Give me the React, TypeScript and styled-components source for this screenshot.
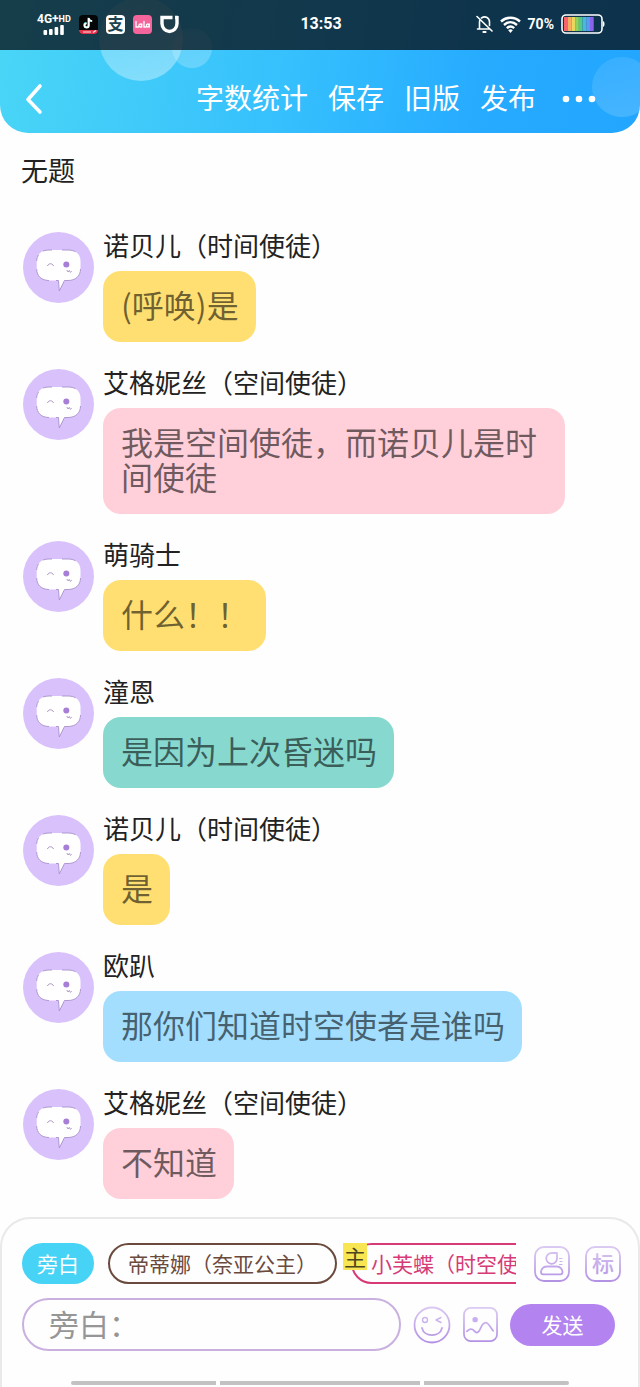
import React from "react";
import styled, { createGlobalStyle } from "styled-components";

const GlobalStyle = createGlobalStyle`
  * { box-sizing: border-box; }
  html, body { margin: 0; padding: 0; background: #fefefe; }
  body, button, input {
    font-family: "Noto Sans CJK SC", "Noto Sans", sans-serif;
  }
  button { border: 0; padding: 0; background: none; color: inherit; cursor: pointer; white-space: nowrap; }
  svg { display: block; flex: none; }
`;

const Page = styled.div`
  display: flex;
  flex-direction: column;
  min-height: 100vh;
  background: #fefefe;
`;

/* ---------- header ---------- */

const Header = styled.header`
  position: relative;
  overflow: hidden;
  border-radius: 0 0 28px 28px;
  background: linear-gradient(100deg, #4ad6f6 0%, #36c0fd 45%, #26abff 75%, #22a6ff 100%);
  color: #fff;
`;

const Orb = styled.span<{ $size: number; $top: number; $left?: number; $right?: number; $alpha: number }>`
  position: absolute;
  width: ${(p) => p.$size}px;
  height: ${(p) => p.$size}px;
  top: ${(p) => p.$top}px;
  ${(p) => (p.$left !== undefined ? `left: ${p.$left}px;` : "")}
  ${(p) => (p.$right !== undefined ? `right: ${p.$right}px;` : "")}
  border-radius: 50%;
  background: linear-gradient(
    160deg,
    rgba(255, 255, 255, ${(p) => p.$alpha / 200}),
    rgba(255, 255, 255, ${(p) => p.$alpha / 100})
  );
`;

const StatusBar = styled.div`
  position: relative;
  display: grid;
  grid-template-columns: 1fr auto 1fr;
  align-items: center;
  height: 50px;
  padding: 0 35px 2px 37px;
  background: rgba(8, 18, 26, 0.78);
`;

const StatusGroup = styled.div<{ $end?: boolean }>`
  display: flex;
  align-items: center;
  gap: ${(p) => (p.$end ? 7 : 8)}px;
  justify-content: ${(p) => (p.$end ? "flex-end" : "flex-start")};
`;

const Network = styled.div`
  display: flex;
  flex-direction: column;
  align-items: center;
  gap: 1px;
  font: 700 12px/10px Roboto, sans-serif;
  small { font-size: 9px; vertical-align: top; }
`;

const Clock = styled.time`
  font: 700 16px/20px Roboto, sans-serif;
`;

const Percent = styled.span`
  font: 700 14px/20px Roboto, sans-serif;
`;

const AppBar = styled.div`
  position: relative;
  display: flex;
  align-items: center;
  gap: 20px;
  height: 83px;
  padding: 14px 44px 0 24px;
`;

const BackButton = styled.button`
  margin-right: auto;
`;

const BarAction = styled.button`
  padding-bottom: 4px;
  font-size: 28px;
  line-height: 36px;
`;

const MoreButton = styled.button`
  padding-left: 6px;
`;

/* ---------- conversation ---------- */

const Main = styled.main`
  flex: 1;
  padding: 18px 23px;
`;

const Title = styled.h1`
  margin: 0 0 44px -2px;
  font-size: 27px;
  font-weight: 400;
  line-height: 37px;
  color: #222;
`;

const Thread = styled.ol`
  display: flex;
  flex-direction: column;
  gap: 27px;
  margin: 0;
  padding: 0;
  list-style: none;
`;

const Message = styled.li`
  display: flex;
  align-items: flex-start;
  gap: 9px;
`;

const MessageBody = styled.div`
  display: flex;
  flex-direction: column;
  align-items: flex-start;
  min-width: 0;
`;

const Speaker = styled.span`
  margin-bottom: 13px;
  font-size: 26px;
  line-height: 26px;
  color: #222;
`;

const Bubble = styled.p<{ $color: string }>`
  max-width: 462px;
  margin: 0;
  padding: 16px 17px 20px 18px;
  border-radius: 18px;
  background: ${(p) => p.$color};
  font-size: 32px;
  line-height: 35px;
  color: rgba(0, 0, 0, 0.58);
`;

/* ---------- composer ---------- */

const Composer = styled.footer`
  display: flex;
  flex-direction: column;
  gap: 14px;
  padding: 24px 17px 2px 20px;
  border: 2px solid #e9e9e9;
  border-bottom: 0;
  border-radius: 30px 30px 0 0;
  background: #fefefe;
`;

const RoleRow = styled.div`
  display: flex;
  align-items: center;
  gap: 15px;
`;

const RoleList = styled.div`
  display: flex;
  flex: 1;
  gap: 14px;
  min-width: 0;
  margin-right: 3px;
  overflow: hidden;
`;

const RoleChip = styled.button<{ $color: string; $filled?: boolean }>`
  position: relative;
  flex: none;
  height: 41px;
  padding: 0 ${(p) => (p.$filled ? 13 : 18)}px 2px;
  border: 2px solid ${(p) => p.$color};
  border-radius: 21px;
  background: ${(p) => (p.$filled ? p.$color : "transparent")};
  color: ${(p) => (p.$filled ? "#fff" : p.$color)};
  font-size: 21px;
  line-height: 24px;
`;

const LeadBadge = styled.span`
  position: absolute;
  top: -2px;
  left: -10px;
  width: 24px;
  height: 27px;
  background: #f8e552;
  color: #4c4620;
  font-size: 22px;
  line-height: 26px;
  text-align: center;
`;

const InputRow = styled.form`
  display: flex;
  align-items: center;
  gap: 12px;
  margin-right: 6px;
`;

const LineInput = styled.input`
  flex: 1;
  min-width: 0;
  height: 53px;
  padding: 0 25px 4px;
  border: 2px solid #c9b0de;
  border-radius: 27px;
  outline: 0;
  background: transparent;
  font-size: 30px;
  color: #444;
  &::placeholder { color: #969696; opacity: 1; }
`;

const SendButton = styled.button`
  width: 105px;
  height: 42px;
  padding-bottom: 2px;
  border-radius: 21px;
  background: #b383f0;
  color: #fff;
  font-size: 21px;
`;

const SystemNav = styled.div`
  display: grid;
  grid-template-columns: 145fr 200fr 145fr;
  gap: 4px;
  margin: 16px 52px 0 49px;
  span { height: 4px; background: #c2c2c2; }
  span:first-child { border-radius: 2px 0 0 2px; }
  span:last-child { border-radius: 0 2px 2px 0; }
`;

/* ---------- drawings ---------- */

const SignalBars = () => (
  <svg width="22" height="10" viewBox="0 0 22 10" fill="#fff">
    <rect x="0.5" y="5" width="3.6" height="5" rx="1" />
    <rect x="6" y="4" width="3.6" height="6" rx="1" />
    <rect x="11.6" y="2" width="3.6" height="8" rx="1" />
    <rect x="17.2" y="0" width="3.6" height="10" rx="1" />
  </svg>
);

const MusicApp = () => (
  <svg width="19" height="19" viewBox="0 0 19 19">
    <rect width="19" height="19" rx="4" fill="#050608" />
    <path d="M9.4 2.8v7.300a2.100 2.100 0 1 1-2.100-2.100M9.400 3c.2 2 1.400 3 3.400 3.200" fill="none" stroke="#35dfe0" strokeWidth="1.8" />
    <path d="M9.800 3v7.400a2.100 2.100 0 1 1-2.100-2.100M9.800 3c.2 2 1.400 3 3.400 3.200" fill="none" stroke="#fff" strokeWidth="1.8" />
    <path d="M0 15h19c0 2.600-1.500 4-4 4H4c-2.500 0-4-1.400-4-4z" fill="#e3344c" />
    <path d="M4 17h8M14 17.500l3-2" stroke="#ffdfe2" strokeWidth="1.200" />
  </svg>
);

const PayApp = () => (
  <svg width="19" height="19" viewBox="0 0 19 19">
    <rect width="19" height="19" rx="4" fill="#fff" />
    <text x="9.5" y="15" fontSize="16" fontWeight="700" textAnchor="middle" fill="#20444f">支</text>
  </svg>
);

const LalaApp = () => (
  <svg width="19" height="19" viewBox="0 0 19 19">
    <rect width="19" height="19" rx="4" fill="#f4669b" />
    <path
      d="M3 6.500v5.500h2.500M8.500 10.200a1.300 1.500 0 1 0 0 .6M8.800 9v3M11 6.500v5.500h2M16 10.200a1.300 1.500 0 1 0 0 .6M16.300 9v3"
      fill="none"
      stroke="#fff"
      strokeWidth="1.300"
      strokeLinecap="round"
    />
  </svg>
);

const ShieldApp = () => (
  <svg width="19" height="19" viewBox="0 0 19 19" fill="none" stroke="#fff">
    <path d="M12.500 2.500H2v6c0 4.500 3.300 8 7.500 8s7.500-3.500 7.500-8V1" strokeWidth="3.400" />
    <path d="M15 2.500h3" strokeWidth="3.400" />
  </svg>
);

const BellOff = () => (
  <svg width="17" height="18" viewBox="0 0 17 18" fill="none" stroke="#fff" strokeWidth="1.600" strokeLinecap="round">
    <path d="M1 1.500l15 14.500M1.500 14h12M3.500 14V7c0-.8.2-1.500.5-2.200M5.500 3C9.500.2 13.500 3 13.500 7v3.500" />
    <path d="M7.300 17h2.400" strokeWidth="1.800" />
  </svg>
);

const Wifi = () => (
  <svg width="21" height="17" viewBox="0 0 21 17" fill="none" stroke="#fff" strokeWidth="2.400">
    <path d="M1 5.500c5.500-5 13.500-5 19 0M4 9c4-3.600 9-3.600 13 0M6.800 12.200c2.300-2 5.100-2 7.400 0" />
    <path d="M8.200 14.200c1.400-1.200 3.200-1.200 4.600 0L10.500 17z" fill="#fff" stroke="none" />
  </svg>
);

const Battery = () => {
  const cells = ["#f4666c", "#f9ad62", "#e8d75c", "#8fd25e", "#55c98a", "#4ab9d8", "#579df0", "#8a63ec"];
  return (
    <svg width="44" height="20" viewBox="0 0 44 20">
      <rect x="1" y="1" width="40" height="18" rx="4" fill="none" stroke="#fff" strokeWidth="1.600" />
      <path d="M42 7c2 .5 2 5.500 0 6z" fill="#fff" />
      {cells.map((color, i) => (
        <rect key={color} x={3 + i * 3.7} y="3" width="3.8" height="14" fill={color} />
      ))}
    </svg>
  );
};

const Chevron = () => (
  <svg width="20" height="32" viewBox="0 0 20 32" fill="none" stroke="#fff" strokeWidth="3.600" strokeLinecap="round" strokeLinejoin="round">
    <path d="M16 3L4 16.500 16 29" />
  </svg>
);

const Dots = () => (
  <svg width="34" height="8" viewBox="0 0 34 8" fill="#fff">
    <circle cx="4" cy="4" r="3.300" />
    <circle cx="17" cy="4" r="3.300" />
    <circle cx="30" cy="4" r="3.300" />
  </svg>
);

const Avatar = () => (
  <svg width="71" height="71" viewBox="0 0 71 71" role="img" aria-label="头像">
    <circle cx="35.5" cy="35.5" r="35.5" fill="#d9c2fc" />
    <path
      d="M26 18h19c8 0 12.500 4.500 12.500 11v8c0 7-5 11.500-12.500 11.500h-3.500L36.300 59 35.500 48.500H26c-7.500 0-12.300-4.500-12.300-11.500v-8C13.700 22.500 18.500 18 26 18z"
      fill="#fff"
    />
    <path
      d="M20 19c2-.7 4-1 6-1h3M39 18h6c3 0 5.500.7 7.500 1.700M57.500 37c0 7-5 11.500-12.500 11.500h-3.500L36.300 59 35.500 48.500H33M26 48.500c-7.500 0-12.300-4.500-12.300-11.500M13.700 29c0-2.500.8-4.500 2-6.200"
      fill="none"
      stroke="#a890c8"
      strokeWidth="0.9"
    />
    <path d="M24.500 34c.8-3 5-3 6 0" fill="none" stroke="#9d88b8" strokeWidth="0.9" />
    <circle cx="43.3" cy="32.6" r="3" fill="#a77fd6" />
    <path d="M43.800 38l1.300 2 1.200-1.600 1 2 1.500-1.200" fill="none" stroke="#a891c2" strokeWidth="0.9" />
  </svg>
);

const PurpleFade = ({ id }: { id: string }) => (
  <defs>
    <linearGradient id={id} gradientUnits="userSpaceOnUse" x1="0" y1="0" x2="0" y2="36">
      <stop offset="0" stopColor="#dccbf3" />
      <stop offset="1" stopColor="#b391e4" />
    </linearGradient>
  </defs>
);

const CastIcon = () => (
  <svg width="36" height="36" viewBox="0 0 36 36" fill="none" stroke="url(#cast)" strokeWidth="1.800" strokeLinecap="round" strokeLinejoin="round">
    <PurpleFade id="cast" />
    <rect x="1" y="1" width="34" height="34" rx="9" />
    <path d="M18 7h5v5.500A5.400 5.400 0 1 1 18 7z" />
    <path d="M12.500 20.500h10.500c3.500 0 5.500 3 5.500 5.800 0 1.200-.8 2-2 2H9c-1.200 0-2-.8-2-2 0-2.800 2-5.800 5.500-5.800z" />
    <path d="M25.500 12.500h2.500M26 15.500h2M25.500 18.500h2.500" strokeWidth="1.100" />
  </svg>
);

const TagIcon = () => (
  <svg width="36" height="36" viewBox="0 0 36 36">
    <PurpleFade id="tag" />
    <rect x="1" y="1" width="34" height="34" rx="9" fill="none" stroke="url(#tag)" strokeWidth="1.800" />
    <text x="18" y="26" fontSize="22" fontWeight="500" textAnchor="middle" fill="url(#tag)">标</text>
  </svg>
);

const SmileIcon = () => (
  <svg width="38" height="38" viewBox="0 0 38 38" fill="none" stroke="url(#smile)" strokeWidth="1.800" strokeLinecap="round" strokeLinejoin="round">
    <PurpleFade id="smile" />
    <circle cx="19" cy="19" r="17.5" />
    <circle cx="12" cy="14" r="2.5" strokeWidth="1.400" />
    <path d="M28 11.500l-5 2.500 5 2.500" strokeWidth="1.400" />
    <path d="M9 22c2 9.500 18 9.500 20 0" />
  </svg>
);

const PictureIcon = () => (
  <svg width="35" height="35" viewBox="0 0 36 36" fill="none" stroke="url(#picture)" strokeWidth="1.800" strokeLinecap="round" strokeLinejoin="round">
    <PurpleFade id="picture" />
    <rect x="1" y="1" width="34" height="34" rx="7" />
    <circle cx="12.5" cy="13" r="2.8" fill="#c9aef0" stroke="none" />
    <path d="M4 25c2.500-2.500 5-3.500 7.500-.5 2.500 3 4.500 2 6-1.500 1.800-4.500 3.500-7 6-7s3.500 3 7.500 8.500" />
  </svg>
);

/* ---------- data ---------- */

const YELLOW = "#ffdf71";
const PINK = "#ffcfda";
const TEAL = "#87d8ce";
const BLUE = "#a3deff";

const messages = [
  { name: "诺贝儿（时间使徒）", text: "(呼唤)是", color: YELLOW },
  { name: "艾格妮丝（空间使徒）", text: "我是空间使徒，而诺贝儿是时间使徒", color: PINK },
  { name: "萌骑士", text: "什么！！", color: YELLOW },
  { name: "潼恩", text: "是因为上次昏迷吗", color: TEAL },
  { name: "诺贝儿（时间使徒）", text: "是", color: YELLOW },
  { name: "欧趴", text: "那你们知道时空使者是谁吗", color: BLUE },
  { name: "艾格妮丝（空间使徒）", text: "不知道", color: PINK },
];

const actions = ["字数统计", "保存", "旧版", "发布"];

export default function App() {
  return (
    <Page>
      <GlobalStyle />
      <Header>
        <Orb $size={84} $top={-3} $left={99} $alpha={38} />
        <Orb $size={40} $top={28} $left={172} $alpha={24} />
        <Orb $size={60} $top={57} $right={-12} $alpha={17} />
        <StatusBar>
          <StatusGroup>
            <Network>
              <span>4G+<small>HD</small></span>
              <SignalBars />
            </Network>
            <MusicApp />
            <PayApp />
            <LalaApp />
            <ShieldApp />
          </StatusGroup>
          <Clock>13:53</Clock>
          <StatusGroup $end>
            <BellOff />
            <Wifi />
            <Percent>70%</Percent>
            <Battery />
          </StatusGroup>
        </StatusBar>
        <AppBar>
          <BackButton type="button" aria-label="返回"><Chevron /></BackButton>
          {actions.map((label) => (
            <BarAction key={label} type="button">{label}</BarAction>
          ))}
          <MoreButton type="button" aria-label="更多"><Dots /></MoreButton>
        </AppBar>
      </Header>

      <Main>
        <Title>无题</Title>
        <Thread>
          {messages.map((m, i) => (
            <Message key={i}>
              <Avatar />
              <MessageBody>
                <Speaker>{m.name}</Speaker>
                <Bubble $color={m.color}>{m.text}</Bubble>
              </MessageBody>
            </Message>
          ))}
        </Thread>
      </Main>

      <Composer>
        <RoleRow>
          <RoleList>
            <RoleChip type="button" $color="#47d3f5" $filled>旁白</RoleChip>
            <RoleChip type="button" $color="#6b4a3e">帝蒂娜（奈亚公主）</RoleChip>
            <RoleChip type="button" $color="#d63b78">
              <LeadBadge>主</LeadBadge>
              小芙蝶（时空使徒）
            </RoleChip>
          </RoleList>
          <button type="button" aria-label="角色"><CastIcon /></button>
          <button type="button" aria-label="标签"><TagIcon /></button>
        </RoleRow>
        <InputRow onSubmit={(e) => e.preventDefault()}>
          <LineInput type="text" aria-label="旁白" placeholder="旁白：" />
          <button type="button" aria-label="表情"><SmileIcon /></button>
          <button type="button" aria-label="图片"><PictureIcon /></button>
          <SendButton type="submit">发送</SendButton>
        </InputRow>
        <SystemNav>
          <span />
          <span />
          <span />
        </SystemNav>
      </Composer>
    </Page>
  );
}
